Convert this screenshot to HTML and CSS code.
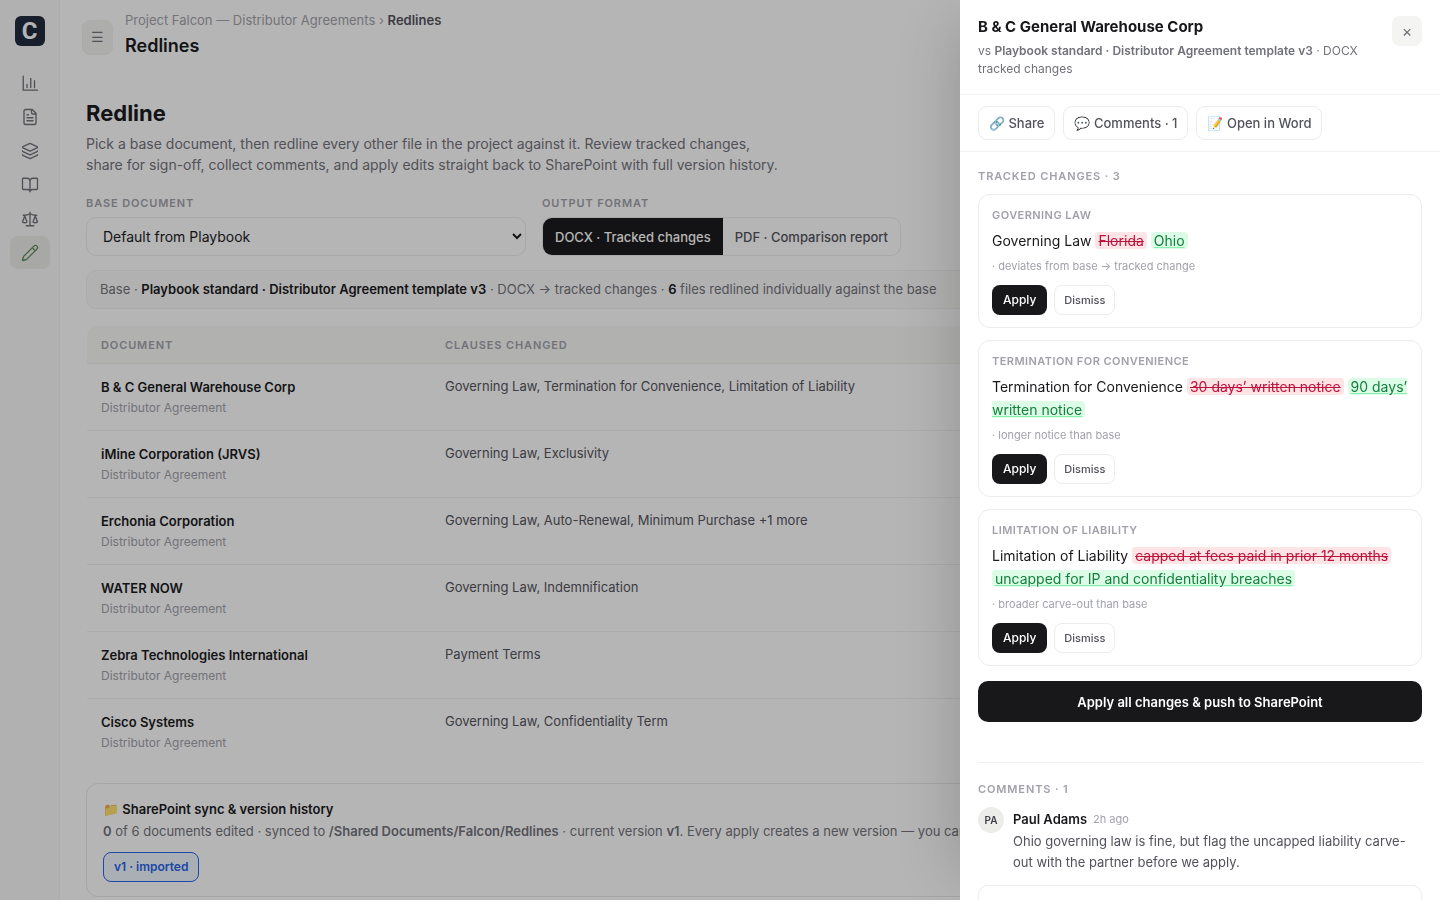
FILE: index.html
```html
<!DOCTYPE html>
<html lang="en">
<head>
<meta charset="utf-8">
<meta name="viewport" content="width=device-width, initial-scale=1">
<title>Redlines</title>
<link rel="stylesheet" href="styles.css">
</head>
<body>
<div class="app">
  <nav class="rail" aria-label="Main">
    <a class="logo" href="#">C</a>
    <a class="rail-link" href="#" aria-label="Dashboard"><svg viewBox="0 0 24 24"><path d="M3 3v18.500h19M8 18v-4M13 18V6M18 18V9"/></svg></a>
    <a class="rail-link" href="#" aria-label="Documents"><svg viewBox="0 0 24 24"><path d="M15 2H6a2 2 0 0 0-2 2v16a2 2 0 0 0 2 2h12a2 2 0 0 0 2-2V7zM14 2v4a2 2 0 0 0 2 2h4M10 9H8M16 13H8M16 17H8"/></svg></a>
    <a class="rail-link" href="#" aria-label="Clauses"><svg viewBox="0 0 24 24"><path d="M12.8 2.2a2 2 0 0 0-1.600 0L2.600 6.100a1 1 0 0 0 0 1.800l8.600 3.900a2 2 0 0 0 1.600 0l8.600-3.900a1 1 0 0 0 0-1.800zM2 12a1 1 0 0 0 .6.900l8.600 3.900a2 2 0 0 0 1.600 0l8.600-3.900A1 1 0 0 0 22 12M2 17a1 1 0 0 0 .6.900l8.600 3.900a2 2 0 0 0 1.600 0l8.600-3.900A1 1 0 0 0 22 17"/></svg></a>
    <a class="rail-link" href="#" aria-label="Playbook"><svg viewBox="0 0 24 24"><path d="M12 7v14M3 18a1 1 0 0 1-1-1V4a1 1 0 0 1 1-1h5a4 4 0 0 1 4 4 4 4 0 0 1 4-4h5a1 1 0 0 1 1 1v13a1 1 0 0 1-1 1h-6a3 3 0 0 0-3 3 3 3 0 0 0-3-3z"/></svg></a>
    <a class="rail-link" href="#" aria-label="Compare"><svg viewBox="0 0 24 24"><path d="M16 16l3-8 3 8c-.87.65-1.920 1-3 1s-2.130-.35-3-1zM2 16l3-8 3 8c-.87.65-1.920 1-3 1s-2.130-.35-3-1zM7 21h10M12 3v18M3 7h2c2 0 5-1 7-2 2 1 5 2 7 2h2"/></svg></a>
    <a class="rail-link active" href="#" aria-label="Redlines" aria-current="page"><svg viewBox="0 0 24 24"><path d="M21.170 6.810a1 1 0 0 0-3.990-3.990L3.840 16.170a2 2 0 0 0-.5.830l-1.320 4.350a.5.5 0 0 0 .62.620l4.350-1.320a2 2 0 0 0 .83-.5zM15 5l4 4"/></svg></a>
  </nav>
  <main class="main">
    <header class="topbar">
      <button class="menu-btn" type="button" aria-label="Toggle menu">☰</button>
      <div>
        <div class="crumbs">Project Falcon — Distributor Agreements › <b>Redlines</b></div>
        <h1>Redlines</h1>
      </div>
    </header>
    <section class="page">
      <h2>Redline</h2>
      <p class="lead">Pick a base document, then redline every other file in the project against it. Review tracked changes, share for sign-off, collect comments, and apply edits straight back to SharePoint with full version history.</p>
      <div class="controls">
        <div class="field">
          <label class="label" for="base">Base document</label>
          <select id="base" class="select"><option>Default from Playbook</option></select>
        </div>
        <div class="field" role="group" aria-labelledby="fmt">
          <span class="label" id="fmt">Output format</span>
          <div class="segment">
            <button class="on" type="button">DOCX · Tracked changes</button>
            <button type="button">PDF · Comparison report</button>
          </div>
        </div>
      </div>
      <div class="summary">Base · <b>Playbook standard · Distributor Agreement template v3</b> · DOCX → tracked changes · <b>6</b> files redlined individually against the base</div>
      <table class="docs">
        <thead><tr><th class="col-doc">Document</th><th>Clauses changed</th></tr></thead>
        <tbody>
          <tr><td><div class="name">B &amp; C General Warehouse Corp</div><div class="kind">Distributor Agreement</div></td><td>Governing Law, Termination for Convenience, Limitation of Liability</td></tr>
          <tr><td><div class="name">iMine Corporation (JRVS)</div><div class="kind">Distributor Agreement</div></td><td>Governing Law, Exclusivity</td></tr>
          <tr><td><div class="name">Erchonia Corporation</div><div class="kind">Distributor Agreement</div></td><td>Governing Law, Auto-Renewal, Minimum Purchase +1 more</td></tr>
          <tr><td><div class="name">WATER NOW</div><div class="kind">Distributor Agreement</div></td><td>Governing Law, Indemnification</td></tr>
          <tr><td><div class="name">Zebra Technologies International</div><div class="kind">Distributor Agreement</div></td><td>Payment Terms</td></tr>
          <tr><td><div class="name">Cisco Systems</div><div class="kind">Distributor Agreement</div></td><td>Governing Law, Confidentiality Term</td></tr>
        </tbody>
      </table>
      <section class="sync">
        <h3>📁 SharePoint sync &amp; version history</h3>
        <p><b>0</b> of 6 documents edited · synced to <b>/Shared Documents/Falcon/Redlines</b> · current version <b>v1</b>. Every apply creates a new version — you can restore any earlier one.</p>
        <button class="version" type="button">v1 · imported</button>
      </section>
    </section>
  </main>
</div>
<div class="overlay"></div>
<aside class="drawer" role="dialog" aria-labelledby="drawer-title">
  <header class="drawer-head">
    <div>
      <h2 id="drawer-title">B &amp; C General Warehouse Corp</h2>
      <p>vs <b>Playbook standard · Distributor Agreement template v3</b> · DOCX tracked changes</p>
    </div>
    <button class="close" type="button" aria-label="Close">×</button>
  </header>
  <div class="tools">
    <button type="button">🔗 Share</button>
    <button type="button">💬 Comments · 1</button>
    <button type="button">📝 Open in Word</button>
  </div>
  <div class="drawer-body">
    <h3 class="section-title">Tracked changes · 3</h3>
    <div class="changes">
      <article class="change">
        <h4>Governing Law</h4>
        <p class="diff">Governing Law <del>Florida</del> <ins>Ohio</ins></p>
        <p class="note">· deviates from base → tracked change</p>
        <div class="actions"><button class="apply" type="button">Apply</button><button class="dismiss" type="button">Dismiss</button></div>
      </article>
      <article class="change">
        <h4>Termination for Convenience</h4>
        <p class="diff">Termination for Convenience <del>30 days’ written notice</del> <ins>90 days’ written notice</ins></p>
        <p class="note">· longer notice than base</p>
        <div class="actions"><button class="apply" type="button">Apply</button><button class="dismiss" type="button">Dismiss</button></div>
      </article>
      <article class="change">
        <h4>Limitation of Liability</h4>
        <p class="diff">Limitation of Liability <del>capped at fees paid in prior 12 months</del> <ins>uncapped for IP and confidentiality breaches</ins></p>
        <p class="note">· broader carve-out than base</p>
        <div class="actions"><button class="apply" type="button">Apply</button><button class="dismiss" type="button">Dismiss</button></div>
      </article>
    </div>
    <button class="apply-all" type="button">Apply all changes &amp; push to SharePoint</button>
    <section class="comments">
      <h3 class="section-title">Comments · 1</h3>
      <div class="comment">
        <span class="avatar">PA</span>
        <div>
          <div class="who"><b>Paul Adams</b><time>2h ago</time></div>
          <p>Ohio governing law is fine, but flag the uncapped liability carve-out with the partner before we apply.</p>
        </div>
      </div>
      <textarea class="reply" aria-label="Add a comment"></textarea>
    </section>
  </div>
</aside>
</body>
</html>
```
FILE: styles.css
```css
* { box-sizing: border-box; }
body {
  margin: 0;
  height: 100vh;
  overflow: hidden;
  background: #fff;
  color: #18181b;
  font: 14px/20px Inter, "Liberation Sans", sans-serif;
}
h1, h2, h3, h4, p { margin: 0; }
button, select, textarea { font: inherit; color: inherit; }
b { font-weight: 600; }

.app { display: flex; height: 100vh; }
.rail {
  display: flex;
  flex-direction: column;
  align-items: center;
  gap: 1px;
  flex: none;
  width: 60px;
  padding-top: 16px;
  background: #fafaf9;
  border-right: 1px solid #f4f4f3;
}
.logo {
  width: 30px;
  height: 30px;
  margin-bottom: 19px;
  border-radius: 6px;
  background: #1e293b;
  color: #fff;
  font: 700 24px/30px Roboto, sans-serif;
  text-align: center;
  text-decoration: none;
}
.rail-link {
  display: grid;
  place-items: center;
  width: 40px;
  height: 33px;
  border-radius: 8px;
  color: #71717a;
}
.rail-link.active { background: #ececeb; color: #5f8a5f; }
.rail-link svg {
  width: 18px;
  height: 18px;
  fill: none;
  stroke: currentColor;
  stroke-width: 1.8;
  stroke-linecap: round;
  stroke-linejoin: round;
}

.main { flex: 1; min-width: 0; overflow: hidden; }
.topbar { display: flex; align-items: center; gap: 12px; padding: 11px 22px 0; }
.menu-btn {
  width: 31px;
  height: 35px;
  padding: 0;
  border: 1px solid #f1f1f0;
  border-radius: 8px;
  background: #f4f4f3;
  color: #71717a;
}
.crumbs { color: #a1a1aa; font-size: 13px; line-height: 18px; }
.crumbs b { color: #52525b; }
h1 { font-size: 18px; font-weight: 600; line-height: 34px; }

.page { padding: 34px 26px; }
.page h2 { font-size: 22px; font-weight: 700; line-height: 32px; }
.lead { max-width: 696px; margin-top: 4px; color: #71717a; font-size: 14px; line-height: 21px; }
.label, .docs th, .section-title, .change h4 {
  color: #a1a1aa;
  font-size: 11px;
  font-weight: 600;
  letter-spacing: .08em;
  line-height: 16px;
  text-transform: uppercase;
}
.controls { display: flex; align-items: flex-end; gap: 16px; margin-top: 20px; }
.field { display: flex; flex-direction: column; gap: 6px; }
.select {
  width: 440px;
  height: 39px;
  padding: 0 0 0 12px;
  border: 1px solid #ececeb;
  border-radius: 10px;
  background: #fff;
}
.segment {
  display: flex;
  height: 39px;
  overflow: hidden;
  border: 1px solid #ececeb;
  border-radius: 10px;
}
.segment button {
  padding: 0 12px;
  border: 0;
  background: none;
  color: #52525b;
  font-size: 13px;
  font-weight: 500;
}
.segment .on { background: #18181b; color: #fff; }
.summary {
  margin-top: 14px;
  padding: 9px 13px;
  border: 1px solid #f1f1f0;
  border-radius: 10px;
  background: #fafaf9;
  color: #71717a;
  font-size: 13px;
  line-height: 19px;
  white-space: nowrap;
}
.summary b { color: #18181b; }

.docs {
  width: 100%;
  margin-top: 17px;
  padding: 0 1px;
  border-spacing: 0;
}
.docs th {
  height: 38px;
  padding: 0 14px;
  background: #f9f9f8;
  border-bottom: 1px solid #f1f1f0;
  text-align: left;
}
.docs th:first-child { border-top-left-radius: 10px; }
.col-doc { width: 344px; }
.docs td {
  padding: 12px 14px;
  border-bottom: 1px solid #f1f1f0;
  color: #52525b;
  font-size: 13px;
  vertical-align: top;
}
.docs tr:last-child td { border-bottom: 0; }
.docs .name { color: #18181b; font-size: 13px; font-weight: 600; line-height: 22px; }
.docs .kind { color: #a1a1aa; font-size: 12px; }

.sync {
  margin-top: 18px;
  padding: 14px 16px;
  border: 1px solid #e8e8e7;
  border-radius: 12px;
}
.sync h3 { font-size: 13px; font-weight: 600; line-height: 22px; }
.sync p { color: #71717a; font-size: 13px; line-height: 22px; white-space: nowrap; }
.version {
  height: 30px;
  margin-top: 10px;
  padding: 0 10px;
  border: 1px solid #2563eb;
  border-radius: 8px;
  background: #eff6ff;
  color: #2563eb;
  font-size: 12px;
  font-weight: 600;
}

.overlay { position: fixed; inset: 0; background: rgba(10, 10, 10, .3); }
.drawer {
  position: fixed;
  inset: 0 0 0 auto;
  width: 480px;
  max-width: 100%;
  overflow: hidden;
  background: #fff;
  box-shadow: -24px 0 60px -24px rgba(0, 0, 0, .2);
}
.drawer-head {
  display: flex;
  justify-content: space-between;
  gap: 12px;
  padding: 16px 18px;
  border-bottom: 1px solid #f1f1f0;
}
.drawer-head h2 { font-size: 15px; font-weight: 700; line-height: 22px; }
.drawer-head p { margin-top: 4px; color: #71717a; font-size: 12px; line-height: 18px; }
.close {
  flex: none;
  width: 30px;
  height: 30px;
  padding: 0;
  border: 0;
  border-radius: 8px;
  background: #f4f4f3;
  color: #71717a;
  font-size: 16px;
}
.tools {
  display: flex;
  gap: 8px;
  padding: 11px 18px;
  border-bottom: 1px solid #f1f1f0;
}
.tools button {
  height: 34px;
  padding: 0 10px;
  border: 1px solid #ececeb;
  border-radius: 9px;
  background: #fff;
  color: #52525b;
  font-size: 13px;
  font-weight: 500;
}
.drawer-body { padding: 16px 18px; }
.changes { display: flex; flex-direction: column; gap: 12px; margin-top: 10px; }
.change { padding: 12px 13px; border: 1px solid #ececeb; border-radius: 12px; }
.change h4 { letter-spacing: .04em; }
.diff { margin-top: 6px; font-size: 14px; line-height: 23px; }
.diff del, .diff ins { padding: 0 3px; border-radius: 4px; }
.diff del { background: #ffe4e6; color: #be123c; }
.diff ins { background: #dcfce7; color: #15803d; text-decoration-color: #86efac; }
.note { margin-top: 6px; color: #a1a1aa; font-size: 11px; line-height: 16px; }
.actions { display: flex; gap: 7px; margin-top: 11px; }
.actions button { height: 30px; border-radius: 8px; font-weight: 500; }
.apply { padding: 0 11px; border: 0; background: #18181b; color: #fff; font-size: 12px; }
.dismiss { padding: 0 9px; border: 1px solid #ececeb; background: #fff; color: #52525b; font-size: 11px; }
.apply-all {
  width: 100%;
  height: 41px;
  margin-top: 15px;
  border: 0;
  border-radius: 10px;
  background: #18181b;
  color: #fff;
  font-size: 13px;
  font-weight: 600;
}
.comments { margin-top: 40px; padding-top: 18px; border-top: 1px solid #f1f1f0; }
.comment { display: flex; gap: 9px; margin-top: 10px; }
.avatar {
  flex: none;
  width: 26px;
  height: 26px;
  border-radius: 50%;
  background: #ececeb;
  color: #3f3f46;
  font-size: 10px;
  font-weight: 600;
  line-height: 26px;
  text-align: center;
}
.who { display: flex; gap: 6px; line-height: 24px; font-size: 13px; }
.who time { color: #a1a1aa; font-size: 11px; }
.comment p { color: #52525b; font-size: 13px; line-height: 21px; }
.reply {
  display: block;
  width: 100%;
  height: 80px;
  margin-top: 12px;
  border: 1px solid #ececeb;
  border-radius: 10px;
  resize: none;
}
```
